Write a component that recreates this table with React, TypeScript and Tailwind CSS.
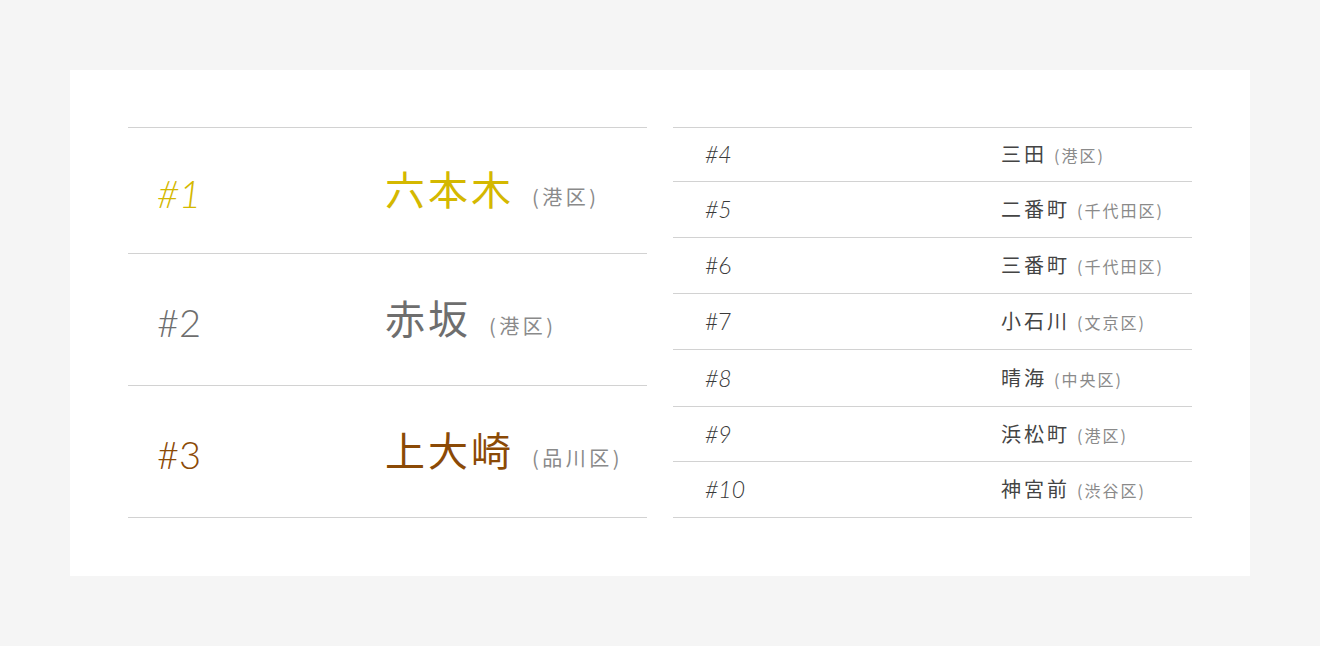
import React from "react";

const cjk = '"Noto Sans CJK JP", "Noto Sans", sans-serif';
const latin = 'Lato, "Noto Sans", sans-serif';

type Top = { rank: string; name: string; ward: string; color: string; h: string; italic: boolean };

const tops: Top[] = [
  { rank: "#1", name: "六本木", ward: "(港区)", color: "text-[#d4b800]", h: "h-[126px]", italic: true },
  { rank: "#2", name: "赤坂", ward: "(港区)", color: "text-[#6e6e6e]", h: "h-[132px]", italic: false },
  { rank: "#3", name: "上大崎", ward: "(品川区)", color: "text-[#8b4a06]", h: "h-[132px]", italic: false },
];

type Row = { rank: string; name: string; ward: string; h: string; italic: boolean };

const rows: Row[] = [
  { rank: "#4", name: "三田", ward: "(港区)", h: "h-[54px]", italic: true },
  { rank: "#5", name: "二番町", ward: "(千代田区)", h: "h-[56px]", italic: true },
  { rank: "#6", name: "三番町", ward: "(千代田区)", h: "h-[56px]", italic: false },
  { rank: "#7", name: "小石川", ward: "(文京区)", h: "h-[56px]", italic: false },
  { rank: "#8", name: "晴海", ward: "(中央区)", h: "h-[57px]", italic: true },
  { rank: "#9", name: "浜松町", ward: "(港区)", h: "h-[55px]", italic: true },
  { rank: "#10", name: "神宮前", ward: "(渋谷区)", h: "h-[56px]", italic: true },
];

export default function App() {
  return (
    <div className="min-h-[646px] w-full bg-[#f5f5f5] p-[70px]">
      <div className="flex gap-[26px] bg-white pt-[57px] pr-[58px] pb-[58px] pl-[58px]">
        <div className="flex w-[519px] flex-col border-t border-[#d2d2d2]">
          {tops.map((t) => (
            <div key={t.rank} className={`flex items-center border-b border-[#d2d2d2] ${t.h}`}>
              <div
                className={`w-[257px] pl-[29px] pt-[4px] text-[38px] font-light leading-none ${t.color} ${t.italic ? "italic" : ""}`}
                style={{ fontFamily: latin }}
              >
                {t.rank}
              </div>
              <div className="-mt-[6px] flex items-baseline" style={{ fontFamily: cjk }}>
                <span className={`text-[40px] leading-none tracking-[3px] ${t.color}`}>{t.name}</span>
                <span className="ml-[18px] text-[20px] leading-none tracking-[3.5px] text-[#8a8a8a]">{t.ward}</span>
              </div>
            </div>
          ))}
        </div>
        <div className="flex w-[519px] flex-col border-t border-[#d2d2d2]">
          {rows.map((r) => (
            <div key={r.rank} className={`flex items-center border-b border-[#d2d2d2] ${r.h}`}>
              <div
                className={`w-[328px] pl-[32px] text-[23px] font-light leading-none text-[#3a3a3a] ${r.italic ? "italic" : ""}`}
                style={{ fontFamily: latin }}
              >
                {r.rank}
              </div>
              <div className="-mt-[1px] flex items-baseline" style={{ fontFamily: cjk }}>
                <span className="text-[20px] leading-none tracking-[3px] text-[#444]">{r.name}</span>
                <span className="ml-[7px] text-[16px] leading-none tracking-[2px] text-[#8a8a8a]">{r.ward}</span>
              </div>
            </div>
          ))}
        </div>
      </div>
    </div>
  );
}
